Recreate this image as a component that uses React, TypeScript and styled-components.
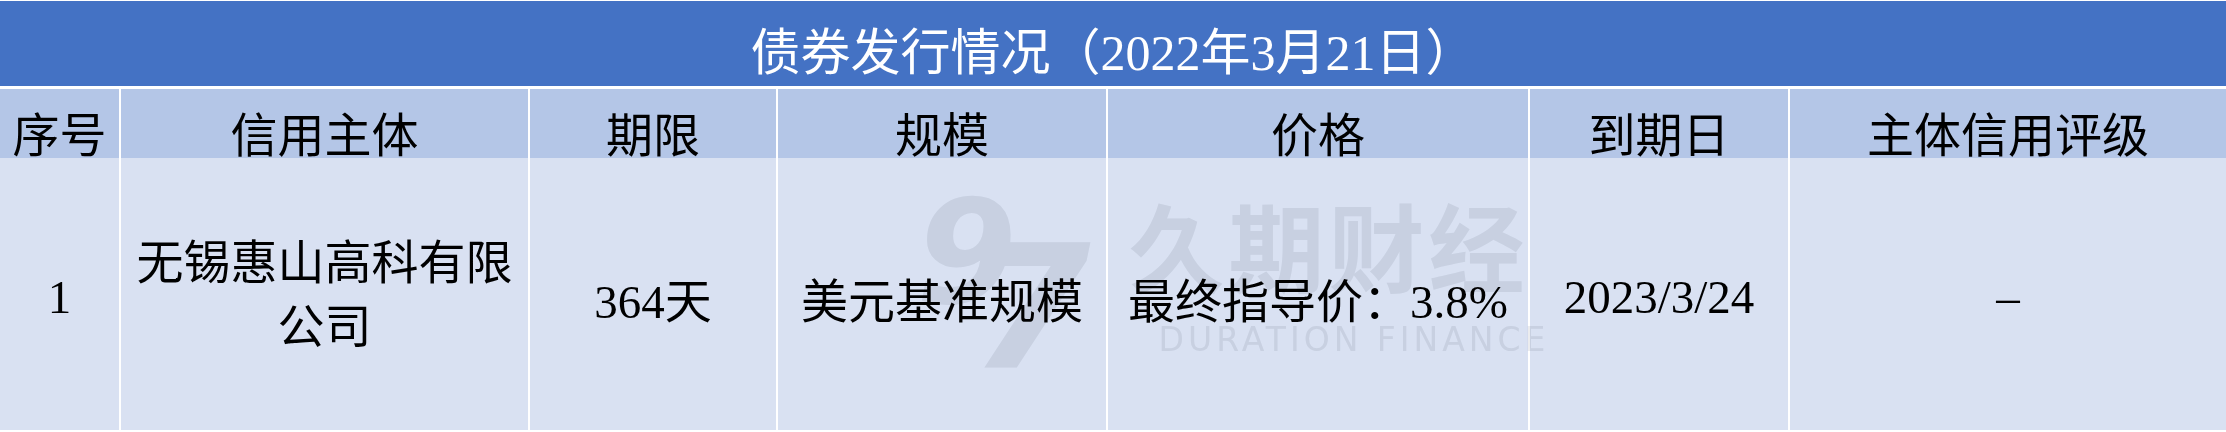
import React from "react";
import styled, { createGlobalStyle } from "styled-components";

const GlobalStyle = createGlobalStyle`
  html, body {
    margin: 0;
    padding: 0;
    background: #ffffff;
  }
  body {
    font-family: "Liberation Serif", "Noto Sans CJK SC", serif;
  }
`;

const Table = styled.div`
  position: relative;
  width: 2226px;
  display: flex;
  flex-direction: column;
  gap: 3px;
  padding: 1px 0 2px 0;
  box-sizing: border-box;
  background: #ffffff;
  font-family: "Liberation Serif", "Noto Sans CJK SC", serif;
  font-size: 47px;
  color: #000000;
`;

const TitleBar = styled.div`
  height: 85px;
  background: #4472c4;
  color: #ffffff;
  display: flex;
  align-items: center;
  justify-content: center;
  padding-top: 8px;
  box-sizing: border-box;
  font-size: 50px;
`;

const Rows = styled.div`
  display: flex;
  flex-direction: column;
  gap: 2px;
`;

const Grid = styled.div<{ $height: number }>`
  display: grid;
  grid-template-columns: 119px 407px 246px 328px 420px 258px 1fr;
  column-gap: 2px;
  height: ${(p) => p.$height}px;
`;

const Cell = styled.div<{ $bg: string; $shift?: number }>`
  background: ${(p) => p.$bg};
  display: flex;
  align-items: center;
  justify-content: center;
  text-align: center;
  padding-top: ${(p) => p.$shift ?? 0}px;
  box-sizing: border-box;
  white-space: nowrap;
`;

const WrapText = styled.div`
  white-space: normal;
  width: 380px;
  line-height: 64px;
  text-align: center;
  margin-top: 2px;
`;

const Watermark = styled.div`
  position: absolute;
  left: 916px;
  top: 180px;
  display: flex;
  align-items: flex-start;
  pointer-events: none;
  mix-blend-mode: multiply;
  color: #ebecee;
`;

const LogoMark = styled.div`
  display: flex;
  align-items: flex-start;
  font-family: "DejaVu Sans", sans-serif;
  font-weight: 700;
  font-style: italic;
  margin-right: 38px;
`;

const Digit = styled.span<{ $size: number; $top: number; $left: number }>`
  font-size: ${(p) => p.$size}px;
  line-height: 1;
  margin-top: ${(p) => p.$top}px;
  margin-left: ${(p) => p.$left}px;
`;

const BrandText = styled.div`
  display: flex;
  flex-direction: column;
  align-items: flex-start;
  padding-top: 10px;
`;

const BrandCn = styled.div`
  font-family: "Noto Sans CJK SC", sans-serif;
  font-weight: 700;
  font-size: 96px;
  line-height: 108px;
  letter-spacing: 4px;
`;

const BrandEn = styled.div`
  font-family: "DejaVu Sans", sans-serif;
  font-size: 33px;
  line-height: 40px;
  letter-spacing: 4px;
  margin-left: 30px;
  margin-top: 22px;
`;

const HEAD_BG = "#b4c6e7";
const BODY_BG = "#d9e1f2";

const headers = ["序号", "信用主体", "期限", "规模", "价格", "到期日", "主体信用评级"];

export default function App() {
  return (
    <>
      <GlobalStyle />
      <Table>
        <TitleBar>债券发行情况（2022年3月21日）</TitleBar>
        <Rows>
          <Grid $height={67}>
            {headers.map((h) => (
              <Cell key={h} $bg={HEAD_BG} $shift={8}>
                {h}
              </Cell>
            ))}
          </Grid>
          <Grid $height={272}>
            <Cell $bg={BODY_BG} $shift={6}>1</Cell>
            <Cell $bg={BODY_BG}>
              <WrapText>无锡惠山高科有限公司</WrapText>
            </Cell>
            <Cell $bg={BODY_BG} $shift={6}>364天</Cell>
            <Cell $bg={BODY_BG} $shift={6}>美元基准规模</Cell>
            <Cell $bg={BODY_BG} $shift={6}>最终指导价：3.8%</Cell>
            <Cell $bg={BODY_BG} $shift={6}>2023/3/24</Cell>
            <Cell $bg={BODY_BG} $shift={6}>–</Cell>
          </Grid>
        </Rows>
        <Watermark>
          <LogoMark>
            <Digit $size={145} $top={0} $left={0}>9</Digit>
            <Digit $size={172} $top={42} $left={-46}>7</Digit>
          </LogoMark>
          <BrandText>
            <BrandCn>久期财经</BrandCn>
            <BrandEn>DURATION FINANCE</BrandEn>
          </BrandText>
        </Watermark>
      </Table>
    </>
  );
}
